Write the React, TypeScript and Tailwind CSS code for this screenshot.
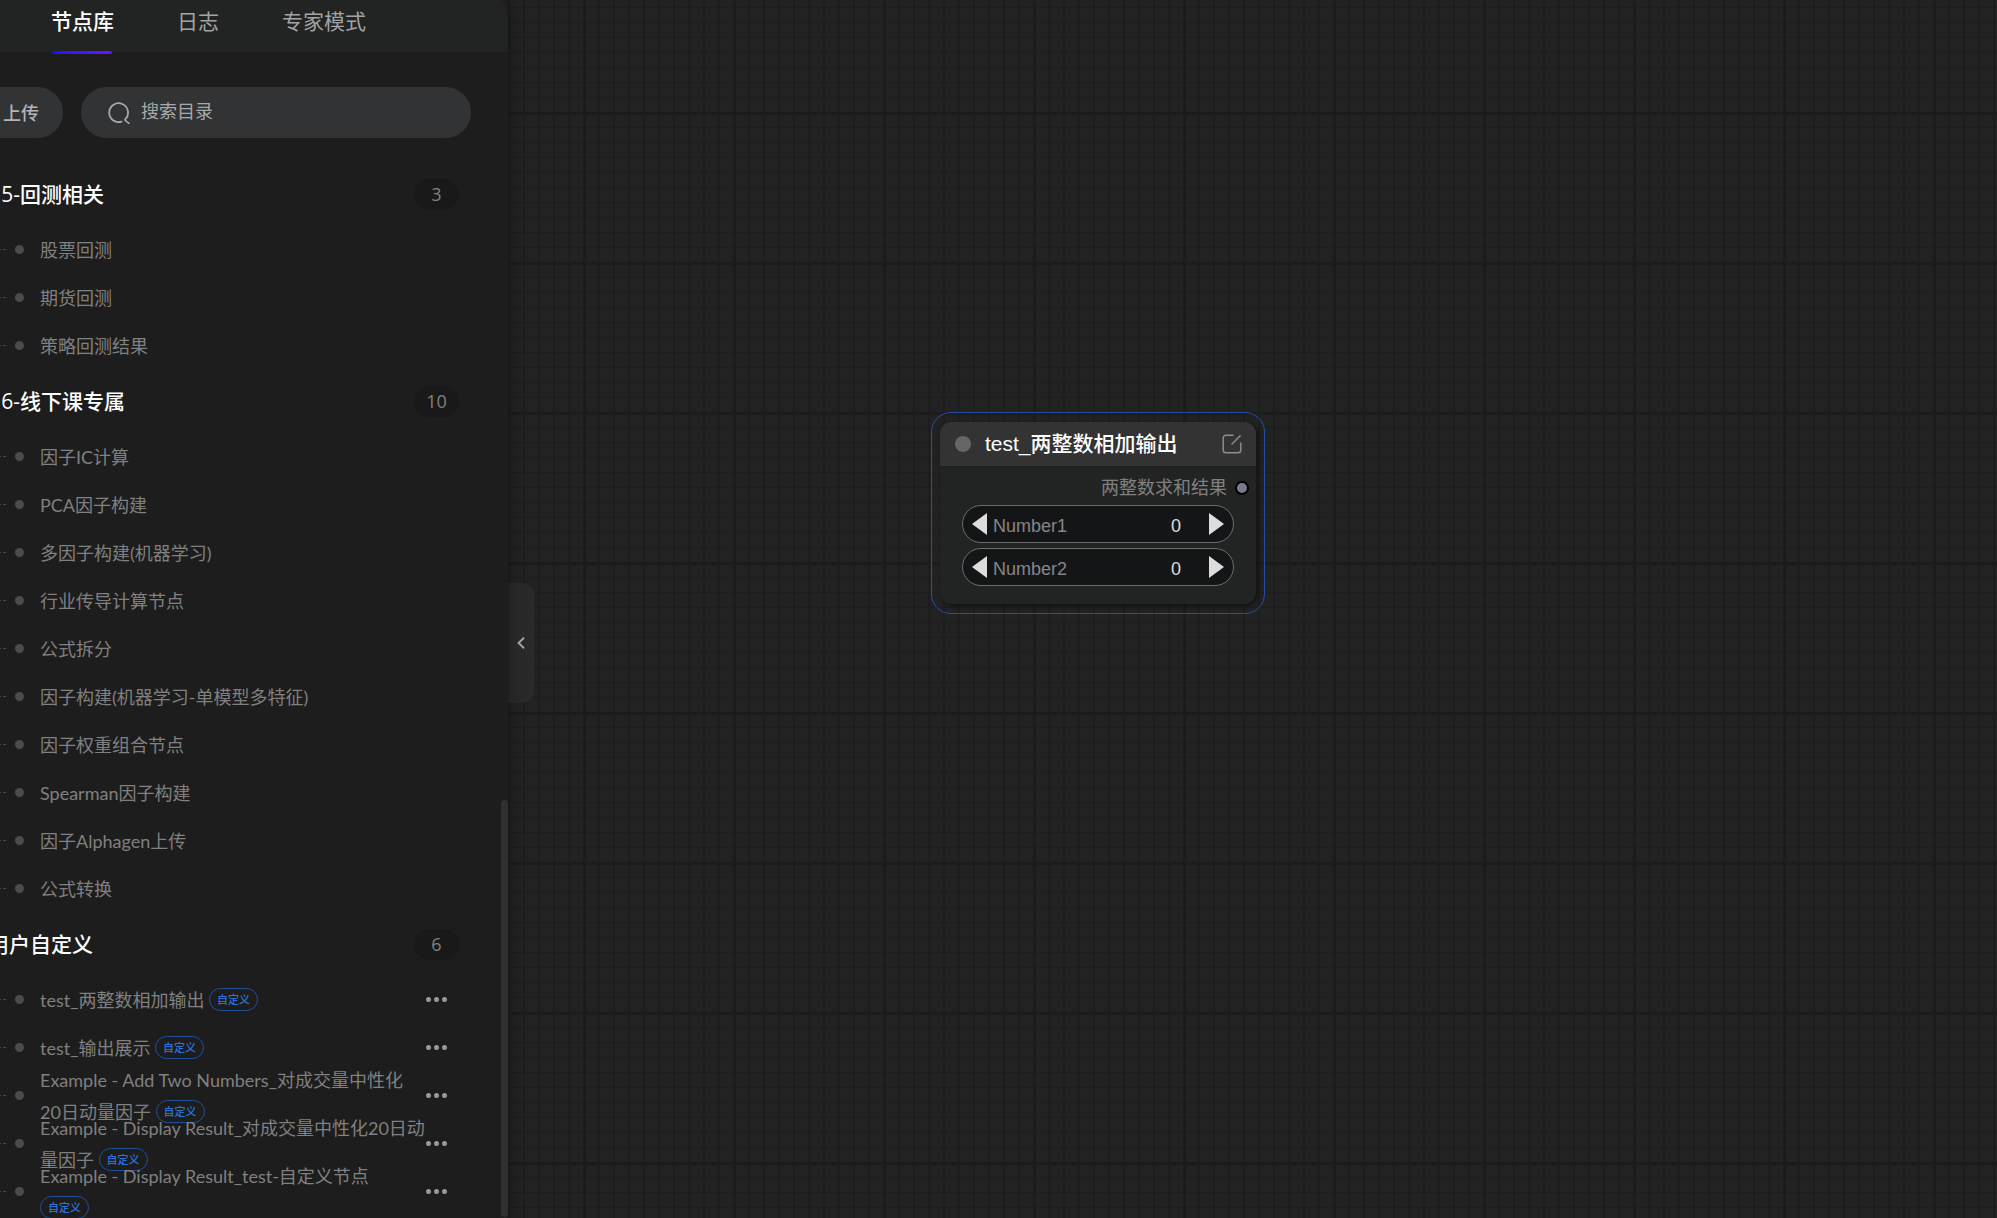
import { useState } from 'react';

type NodeGroup = {
  index?: string;
  title: string;
  count: number;
  custom?: boolean;
  items: string[];
};

const tabs = ['节点库', '日志', '专家模式'];

const groups: NodeGroup[] = [
  {
    index: '5-',
    title: '回测相关',
    count: 3,
    items: ['股票回测', '期货回测', '策略回测结果'],
  },
  {
    index: '6-',
    title: '线下课专属',
    count: 10,
    items: [
      '因子IC计算',
      'PCA因子构建',
      '多因子构建(机器学习)',
      '行业传导计算节点',
      '公式拆分',
      '因子构建(机器学习-单模型多特征)',
      '因子权重组合节点',
      'Spearman因子构建',
      '因子Alphagen上传',
      '公式转换',
    ],
  },
  {
    title: '用户自定义',
    count: 6,
    custom: true,
    items: [
      'test_两整数相加输出',
      'test_输出展示',
      'Example - Add Two Numbers_对成交量中性化\n20日动量因子',
      'Example - Display Result_对成交量中性化20日动\n量因子',
      'Example - Display Result_test-自定义节点\n',
    ],
  },
];

function SearchIcon() {
  return (
    <svg className="size-[22px] shrink-0" viewBox="0 0 22 22" fill="none" stroke="#a9a9a9" strokeWidth="1.8" strokeLinecap="round">
      <path d="M13.6 19.6A9.4 9.4 0 1 1 17.4 17.2C16.6 18 17.4 18.6 20.8 21.2" />
    </svg>
  );
}

function EditIcon() {
  return (
    <svg className="size-5 shrink-0" viewBox="0 0 20 20" fill="none" stroke="#8c8c8c" strokeWidth="1.5" strokeLinecap="round">
      <path d="M11 1.2H4A2.8 2.8 0 0 0 1.2 4V16A2.8 2.8 0 0 0 4 18.8H16A2.8 2.8 0 0 0 18.8 16V9" />
      <path d="M10 10L18.2 1.8" />
    </svg>
  );
}

function ListItem({ name, custom }: { name: string; custom?: boolean }) {
  return (
    <li className="flex h-12 items-center">
      <span className="h-px w-[6px] shrink-0 bg-[linear-gradient(90deg,#4a4a4a_1px,transparent_1px,transparent_3px,#4a4a4a_3px)]" />
      <span className="ml-[9px] size-[9px] shrink-0 rounded-full bg-[#4b4b4b]" />
      <div className="ml-4 w-[386px] shrink-0 pt-px font-['Lato','Noto_Sans_CJK_SC',sans-serif] text-lg/[32px] whitespace-pre-line text-[#808080]">
        {name}{' '}
        {custom && (
          <span className="inline-flex h-[23px] items-center rounded-full border border-[#1f5099] px-[7px] align-[3px] text-[11px] font-medium text-[#2b72d9]">
            自定义
          </span>
        )}
      </div>
      {custom && (
        <button type="button" aria-label="更多" className="flex shrink-0 gap-[3px]">
          <span className="size-[5px] rounded-full bg-[#9a9a9a]" />
          <span className="size-[5px] rounded-full bg-[#9a9a9a]" />
          <span className="size-[5px] rounded-full bg-[#9a9a9a]" />
        </button>
      )}
    </li>
  );
}

function Sidebar() {
  const [active, setActive] = useState(tabs[0]);

  return (
    <aside className="relative z-10 -mt-2 flex w-[508px] shrink-0 flex-col overflow-hidden rounded-tr-3xl bg-[#1d1d1d] font-['Open_Sans','Noto_Sans_CJK_SC',sans-serif] shadow-[0_0_20px_rgba(0,0,0,0.35)]">
      <nav className="flex h-15 shrink-0 gap-[63px] bg-[#222423] pt-2 pl-[51px]">
        {tabs.map((tab) => (
          <button
            key={tab}
            type="button"
            onClick={() => setActive(tab)}
            className={
              tab === active
                ? 'relative h-[43px] text-[21px] font-medium text-white'
                : 'relative h-[43px] text-[21px] text-[#a3a3a3]'
            }
          >
            {tab}
            {tab === active && (
              <span className="absolute top-[51px] left-px h-[3px] w-[60px] rounded-sm bg-linear-to-r from-[#1010ff] to-[#6a10ff]" />
            )}
          </button>
        ))}
      </nav>

      <div className="mt-[35px] flex h-[51px] shrink-0 gap-[18px] pr-[37px]">
        <button type="button" className="-ml-9 w-[99px] shrink-0 rounded-full bg-[#323335] pr-6 text-right text-lg font-medium text-[#b4b4b4]">
          上传
        </button>
        <label className="flex flex-1 items-center gap-[11px] rounded-full bg-[#323335] px-[27px]">
          <SearchIcon />
          <input
            type="text"
            aria-label="搜索目录"
            placeholder="搜索目录"
            className="min-w-0 flex-1 bg-transparent pb-[3px] text-lg text-white outline-none placeholder:text-[#a9a9a9]"
          />
        </label>
      </div>

      <div className="mt-[24px] flex min-h-0 flex-1">
        <div className="min-w-0 flex-1 overflow-hidden">
          {groups.map((group) => (
            <section key={group.title}>
              <div className="flex h-[63px] items-center justify-between pt-0.5 pr-[42px]">
                <h2 className="-ml-3 flex pt-px text-[21px] font-medium text-white">
                  {group.index && <span className="w-8 text-right">{group.index}</span>}
                  {group.title}
                </h2>
                <span className="flex h-[31px] w-[45px] items-center justify-center rounded-full bg-[#191919] pb-0.5 text-lg text-[#808080]">
                  {group.count}
                </span>
              </div>
              <ul>
                {group.items.map((name) => (
                  <ListItem key={name} name={name} custom={group.custom} />
                ))}
              </ul>
            </section>
          ))}
        </div>
        {/* scrollbar thumb */}
        <div className="flex w-[7px] flex-col justify-end pb-px">
          <div className="h-[417px] rounded-full bg-[#303030]" />
        </div>
      </div>
    </aside>
  );
}

function NumberWidget({ label }: { label: string }) {
  const [value, setValue] = useState(0);

  return (
    <div className="flex h-[38px] items-center rounded-full border border-[#6c6c6c] bg-[#141517] px-[9px] text-lg">
      <button type="button" aria-label={`${label} -`} onClick={() => setValue(value - 1)}>
        <svg className="h-[22px] w-[15px]" viewBox="0 0 15 22" fill="#dddddd">
          <path d="M15 0V22L0 11Z" />
        </svg>
      </button>
      <label className="ml-[6px] flex flex-1 items-center pt-[3px] text-[#868686]">
        {label}
        <input
          type="text"
          value={value}
          onChange={(e) => setValue(Number(e.target.value) || 0)}
          className="ml-auto w-20 bg-transparent text-right text-[#dddddd] outline-none"
        />
      </label>
      <button type="button" aria-label={`${label} +`} className="ml-7" onClick={() => setValue(value + 1)}>
        <svg className="h-[22px] w-[15px]" viewBox="0 0 15 22" fill="#dddddd">
          <path d="M0 0V22L15 11Z" />
        </svg>
      </button>
    </div>
  );
}

function GraphNode() {
  return (
    <div className="absolute top-[412px] left-[423px] w-[334px] rounded-[20px] border border-[#234fa3] px-2 py-[9px] font-['Liberation_Sans','Noto_Sans_CJK_SC',sans-serif]">
      <div className="overflow-hidden rounded-xl bg-[#222423] shadow-[2px_2px_4px_rgba(0,0,0,0.5)]">
        <div className="flex h-[45px] items-center border-b border-[#1f1f1f] bg-[#333333] pr-[14px] pl-[15px]">
          <span className="size-4 rounded-full bg-[#666666]" />
          <h3 className="ml-[14px] flex-1 text-[21px] font-medium text-white">test_两整数相加输出</h3>
          <button type="button" aria-label="编辑">
            <EditIcon />
          </button>
        </div>
        <div className="flex h-[38px] items-center justify-end gap-2 pt-1 pr-[7px] text-lg text-[#808080]">
          两整数求和结果
          <span className="size-[14px] rounded-full border-2 border-black bg-[#7c7a8e]" />
        </div>
        <div className="flex flex-col gap-[5px] px-[22px] pb-[18px]">
          <NumberWidget label="Number1" />
          <NumberWidget label="Number2" />
        </div>
      </div>
    </div>
  );
}

export default function App() {
  return (
    <div className="flex h-screen overflow-hidden bg-[#222222]">
      <Sidebar />
      <main className="relative flex-1 bg-[linear-gradient(90deg,#1b1b1b_3px,transparent_3px),linear-gradient(#1c1c1c_3px,transparent_3px),linear-gradient(90deg,#1d1d1d_2px,transparent_2px),linear-gradient(#1d1d1d_1px,transparent_1px)] bg-[size:150px_150px,150px_150px,15px_15px,15px_15px] bg-[position:75px_0,0_112px,0_0,0_7px]">
        <button
          type="button"
          aria-label="收起"
          className="absolute top-[583px] left-0 flex h-[120px] w-[26px] items-center justify-center rounded-r-xl bg-[#2b2b2b]/90"
        >
          <svg className="h-3 w-2" viewBox="0 0 8 12" fill="none" stroke="#a8a8a8" strokeWidth="2">
            <path d="M7 0.8L1.6 6L7 11.2" />
          </svg>
        </button>
        <GraphNode />
      </main>
    </div>
  );
}
